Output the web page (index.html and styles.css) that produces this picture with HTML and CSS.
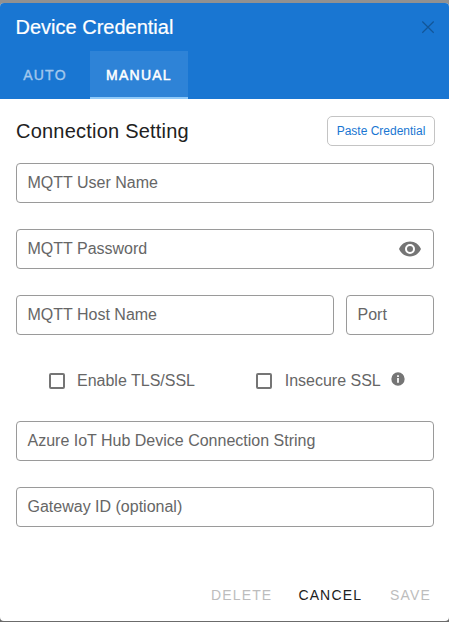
FILE: index.html
```html
<!DOCTYPE html>
<html lang="en">
<head>
<meta charset="utf-8">
<title>Device Credential</title>
<link rel="stylesheet" href="styles.css">
</head>
<body>
<main class="dialog">
  <header class="header">
    <div class="title-row">
      <h1 class="title">Device Credential</h1>
      <svg class="close" width="14" height="14" viewBox="0 0 14 14"><path d="M1.300 1.500L12.700 12.700M12.700 1.500L1.300 12.700"/></svg>
    </div>
    <nav class="tabs">
      <div class="tab">AUTO</div>
      <div class="tab tab-active">MANUAL</div>
    </nav>
  </header>
  <section class="content">
    <div class="section-head">
      <h2 class="section-title">Connection Setting</h2>
      <button class="paste">Paste Credential</button>
    </div>
    <div class="field">MQTT User Name</div>
    <div class="field">MQTT Password
      <svg class="eye" width="24" height="24" viewBox="0 0 24 24"><path d="M12 9a3 3 0 0 0-3 3 3 3 0 0 0 3 3 3 3 0 0 0 3-3 3 3 0 0 0-3-3m0 8a5 5 0 0 1-5-5 5 5 0 0 1 5-5 5 5 0 0 1 5 5 5 5 0 0 1-5 5m0-12.500C7 4.500 2.730 7.610 1 12c1.730 4.390 6 7.500 11 7.500s9.270-3.110 11-7.500c-1.730-4.390-6-7.500-11-7.500z"/></svg>
    </div>
    <div class="host-row">
      <div class="field host">MQTT Host Name</div>
      <div class="field port">Port</div>
    </div>
    <div class="checks">
      <label class="check tls"><span class="box"></span>Enable TLS/SSL</label>
      <label class="check insecure"><span class="box"></span>Insecure SSL</label>
      <svg class="info" width="16" height="16" viewBox="0 0 24 24"><path d="M13.300 9h-2.600V6.500h2.600m0 11h-2.600v-7h2.600m-1.300-8.500A10 10 0 0 0 2 12a10 10 0 0 0 10 10 10 10 0 0 0 10-10A10 10 0 0 0 12 2z"/></svg>
    </div>
    <div class="field">Azure IoT Hub Device Connection String</div>
    <div class="field">Gateway ID (optional)</div>
  </section>
  <footer class="actions">
    <button class="action" disabled>DELETE</button>
    <button class="action">CANCEL</button>
    <button class="action save" disabled>SAVE</button>
  </footer>
</main>
</body>
</html>
```
FILE: styles.css
```css
* { box-sizing: border-box; }
body {
  margin: 0;
  height: 622px;
  padding: 3px 0 1px;
  overflow: hidden;
  background: linear-gradient(#919191 50%, #6b6b6b 50%);
  font-family: "Liberation Sans", Arial, sans-serif;
  font-size: 16px;
}
.dialog {
  display: flex;
  flex-direction: column;
  height: 618px;
  border-radius: 4px;
  overflow: hidden;
  background: #fff;
}
.header { height: 96px; background: #1976d2; color: #fff; }
.title-row {
  display: flex;
  align-items: center;
  justify-content: space-between;
  height: 48px;
  padding: 0 14px 0 15.5px;
}
.title { margin: 0; font-size: 20px; font-weight: 400; -webkit-text-stroke: 0.2px #fff; }
.close { fill: none; stroke: #125699; stroke-width: 1.2; }
.tabs { display: flex; height: 48px; }
.tab {
  display: flex;
  align-items: center;
  justify-content: center;
  width: 90px;
  font-size: 14px;
  letter-spacing: 1.25px;
  color: #a3c8ed;
  -webkit-text-stroke: 0.4px #a3c8ed;
}
.tab-active {
  width: 98px;
  padding-top: 2px;
  border-bottom: 2px solid #90caf9;
  background: #2e83d7;
  color: #fff;
  -webkit-text-stroke: 0.5px #fff;
}
.content { padding: 17px 15px 0 16px; }
.section-head {
  display: flex;
  align-items: center;
  justify-content: space-between;
  height: 30px;
  margin: 0 -1px 17px 0;
}
.section-title {
  margin: 0;
  font-size: 20px;
  font-weight: 400;
  letter-spacing: 0.22px;
  color: #212121;
}
.paste {
  width: 108px;
  height: 30px;
  padding: 0;
  border: 1px solid #c4c4c4;
  border-radius: 5px;
  background: #fff;
  color: #1976d2;
  font: 12px "Liberation Sans", Arial, sans-serif;
}
.field {
  display: flex;
  align-items: center;
  justify-content: space-between;
  height: 40px;
  margin-bottom: 26px;
  padding: 0 11px 0 10.5px;
  border: 1px solid #9a9a9a;
  border-radius: 4px;
  color: #666;
}
.eye { fill: #757575; }
.host-row { display: flex; gap: 12px; }
.host { width: 318px; }
.port { width: 88px; }
.checks {
  display: flex;
  align-items: center;
  height: 40px;
  margin-bottom: 20px;
  padding-left: 33px;
  color: #666;
}
.check { display: flex; align-items: center; gap: 12px; }
.tls { width: 207px; }
.insecure { gap: 12.7px; }
.box { width: 16px; height: 16px; border: 2px solid #757575; border-radius: 2px; }
.info { margin: -4px 0 0 9px; fill: #757575; }
.actions {
  display: flex;
  justify-content: flex-end;
  gap: 26px;
  margin-top: auto;
  padding: 0 18px 16px;
}
.action {
  height: 20px;
  padding: 0;
  border: 0;
  background: none;
  color: #212121;
  font: 14px "Liberation Sans", Arial, sans-serif;
  letter-spacing: 1.15px;
}
.save { margin-left: 2px; }
.action:disabled { color: #bdbdbd; }
```
